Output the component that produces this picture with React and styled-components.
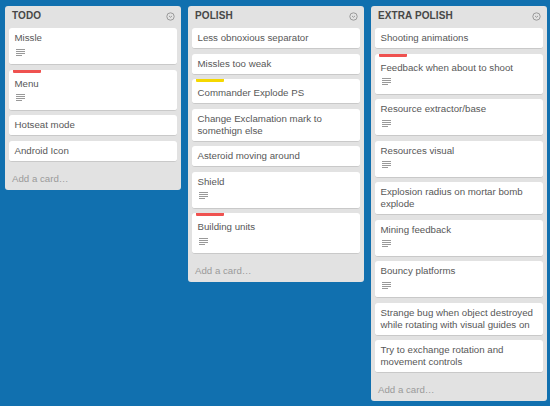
import React from "react";
import styled, { createGlobalStyle } from "styled-components";

const GlobalStyle = createGlobalStyle`
  html, body {
    margin: 0;
    padding: 0;
    background: #1170af;
  }
  body {
    font-family: "Liberation Sans", Arial, sans-serif;
    -webkit-font-smoothing: antialiased;
  }
`;

const Board = styled.div`
  display: flex;
  align-items: flex-start;
  gap: 7px;
  padding: 6px 5px;
  min-height: 406px;
  box-sizing: border-box;
`;

const List = styled.div`
  width: 176px;
  flex: none;
  background: #e2e2e2;
  border-radius: 3px;
  box-sizing: border-box;
`;

const Header = styled.div`
  display: flex;
  align-items: center;
  justify-content: space-between;
  padding: 4px 6px 6px 7px;
  height: 22px;
  box-sizing: border-box;
`;

const Title = styled.h2`
  margin: 0;
  font-size: 10px;
  line-height: 12px;
  font-weight: bold;
  color: #474747;
  letter-spacing: 0.1px;
`;

const Cards = styled.div`
  display: flex;
  flex-direction: column;
  gap: 4.5px;
  padding: 0 4px;
`;

const Card = styled.div`
  background: #fff;
  border-radius: 3px;
  border-bottom: 1px solid #c9c9c9;
  padding: 4px 6px 4px 5.5px;
  font-size: 9.7px;
  line-height: 12px;
  color: #575757;
`;

const Label = styled.div`
  width: 28px;
  height: 3px;
  margin: -4px 0 5px -1.5px;
  background: ${(p) => p.color};
  border-radius: 0 0 1px 1px;
`;

const Badges = styled.div`
  display: flex;
  align-items: center;
  height: 16px;
  padding-left: 1px;
`;

const AddCard = styled.div`
  padding: 11px 7px 5px;
  font-size: 9.7px;
  line-height: 12px;
  color: #9a9a9a;
`;

const MenuIcon = () => (
  <svg width="9" height="9" viewBox="0 0 9 9">
    <circle cx="4.5" cy="4.5" r="3.7" fill="none" stroke="#999" strokeWidth="1" />
    <path d="M3 3.9 L4.5 5.3 L6 3.9" fill="none" stroke="#999" strokeWidth="1" />
  </svg>
);

const DescIcon = () => (
  <svg width="9" height="7" viewBox="0 0 9 7">
    <g fill="#999">
      <rect x="0" y="0" width="9" height="1" />
      <rect x="0" y="2" width="9" height="1" />
      <rect x="0" y="4" width="9" height="1" />
      <rect x="0" y="6" width="6" height="1" />
    </g>
  </svg>
);

const RED = "#ef5250";
const YELLOW = "#f5d800";

const lists = [
  {
    title: "TODO",
    cards: [
      { text: "Missle", desc: true },
      { text: "Menu", desc: true, label: RED },
      { text: "Hotseat mode" },
      { text: "Android Icon" },
    ],
  },
  {
    title: "POLISH",
    cards: [
      { text: "Less obnoxious separator" },
      { text: "Missles too weak" },
      { text: "Commander Explode PS", label: YELLOW },
      { text: "Change Exclamation mark to somethign else" },
      { text: "Asteroid moving around" },
      { text: "Shield", desc: true },
      { text: "Building units", desc: true, label: RED },
    ],
  },
  {
    title: "EXTRA POLISH",
    cards: [
      { text: "Shooting animations" },
      { text: "Feedback when about to shoot", desc: true, label: RED },
      { text: "Resource extractor/base", desc: true },
      { text: "Resources visual", desc: true },
      { text: "Explosion radius on mortar bomb explode" },
      { text: "Mining feedback", desc: true },
      { text: "Bouncy platforms", desc: true },
      { text: "Strange bug when object destroyed while rotating with visual guides on" },
      { text: "Try to exchange rotation and movement controls" },
    ],
  },
];

const App = () => (
  <>
    <GlobalStyle />
    <Board>
      {lists.map((list) => (
        <List key={list.title}>
          <Header>
            <Title>{list.title}</Title>
            <MenuIcon />
          </Header>
          <Cards>
            {list.cards.map((card) => (
              <Card key={card.text}>
                {card.label && <Label color={card.label} />}
                <div>{card.text}</div>
                {card.desc && (
                  <Badges>
                    <DescIcon />
                  </Badges>
                )}
              </Card>
            ))}
          </Cards>
          <AddCard>Add a card…</AddCard>
        </List>
      ))}
    </Board>
  </>
);

export default App;
